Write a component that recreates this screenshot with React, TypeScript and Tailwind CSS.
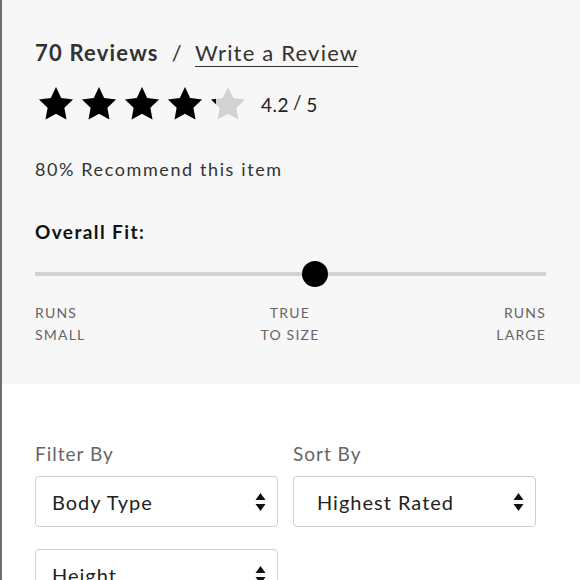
import React from "react";

const STAR = "M12 1.8l3.1 6.6 7.1.9-5.2 4.9 1.3 7.1L12 17.8l-6.3 3.5 1.3-7.1L1.8 9.3l7.1-.9z";

function Star({ fill, id }: { fill: number; id: string }) {
  return (
    <svg width="40" height="40" viewBox="0 0 24 24">
      <defs>
        <clipPath id={id}>
          <rect x="0" y="0" width={24 * fill} height="24" />
        </clipPath>
      </defs>
      <path d={STAR} fill="#d2d2d2" />
      <path d={STAR} fill="#000" clipPath={`url(#${id})`} />
    </svg>
  );
}

function Arrows() {
  return (
    <svg width="11" height="20" viewBox="0 0 11 20">
      <path d="M5.5 1 L10.5 8 L0.5 8 Z" fill="#111" />
      <path d="M0.5 12 L10.5 12 L5.5 19 Z" fill="#111" />
    </svg>
  );
}

function Select({ label, pl }: { label: string; pl: string }) {
  return (
    <div className={`flex h-[51px] w-[243px] items-center justify-between rounded-[4px] border border-[#cfcfcf] bg-white pr-[11px] ${pl}`}>
      <span className="text-[20px] tracking-[1px] text-[#222]">{label}</span>
      <Arrows />
    </div>
  );
}

export default function App() {
  const stars = [1, 1, 1, 1, 0.2];
  return (
    <div
      className="h-[580px] w-[580px] overflow-hidden border-l-2 border-[#6f6f6f] bg-white"
      style={{ fontFamily: "Lato, 'Open Sans', sans-serif" }}
    >
      <div className="h-[384px] bg-[#f7f7f7] pl-[33px] pr-[34px] pt-[38px]">
        <div className="flex items-baseline text-[22px] leading-[30px] tracking-[1.2px] text-[#333]">
          <span className="font-bold">70 Reviews</span>
          <span className="ml-[13px] mr-[12px]">/</span>
          <span className="underline decoration-1 underline-offset-[5px]">Write a Review</span>
        </div>
        <div className="mt-[16px] flex items-center">
          <div className="ml-[1px] flex gap-[3px]">
            {stars.map((f, i) => (
              <Star key={i} fill={f} id={`s${i}`} />
            ))}
          </div>
          <div className="ml-[13px] mt-[2px] flex items-start text-[19px] tracking-[0.5px] text-[#222]">
            <span>4.2</span>
            <span className="mx-[4px] -mt-[3px]">/</span>
            <span>5</span>
          </div>
        </div>
        <div className="mt-[33px] text-[18px] leading-[24px] tracking-[1.6px] text-[#333]">80% Recommend this item</div>
        <div className="mt-[39px] text-[19px] font-bold leading-[24px] tracking-[1.4px] text-[#111]">Overall Fit:</div>
        <div className="relative mt-[17px] h-[26px]">
          <div className="absolute left-0 right-0 top-[11px] h-[4px] bg-[#d2d2d2]" />
          <div className="absolute left-[267px] top-0 h-[26px] w-[26px] rounded-full bg-black" />
        </div>
        <div className="mt-[15px] flex justify-between text-[14px] uppercase leading-[22px] tracking-[1.2px] text-[#666]">
          <div>
            <div>Runs</div>
            <div>Small</div>
          </div>
          <div className="mr-[2px] text-center">
            <div>True</div>
            <div>To Size</div>
          </div>
          <div className="text-right">
            <div>Runs</div>
            <div>Large</div>
          </div>
        </div>
      </div>
      <div className="pl-[33px] pt-[58px]">
        <div className="flex gap-[15px]">
          <div>
            <div className="mb-[10px] text-[19px] leading-[24px] tracking-[1px] text-[#666]">Filter By</div>
            <Select label="Body Type" pl="pl-[16px]" />
          </div>
          <div>
            <div className="mb-[10px] text-[19px] leading-[24px] tracking-[1px] text-[#666]">Sort By</div>
            <Select label="Highest Rated" pl="pl-[23px]" />
          </div>
        </div>
        <div className="mt-[22px]">
          <Select label="Height" pl="pl-[16px]" />
        </div>
      </div>
    </div>
  );
}
